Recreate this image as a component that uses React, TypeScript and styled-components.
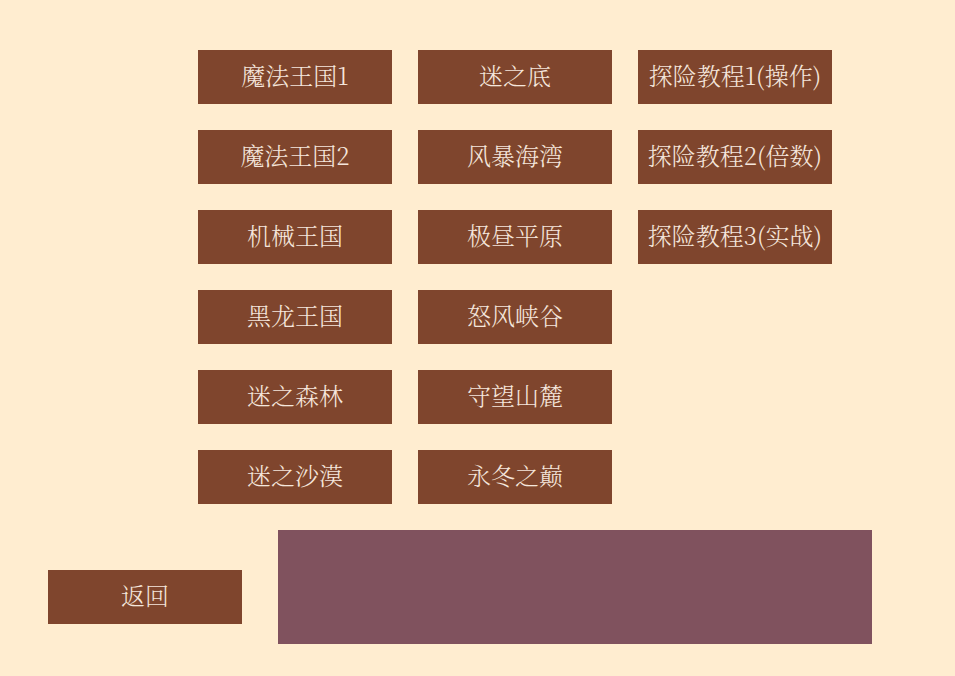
import styled, { createGlobalStyle } from 'styled-components';

const GlobalStyle = createGlobalStyle`
  html, body {
    margin: 0;
    padding: 0;
    background: #ffedd0;
  }
  body {
    font-family: "Noto Sans CJK SC", serif;
  }
`;

const columns: string[][] = [
  ['魔法王国1', '魔法王国2', '机械王国', '黑龙王国', '迷之森林', '迷之沙漠'],
  ['迷之底', '风暴海湾', '极昼平原', '怒风峡谷', '守望山麓', '永冬之巅'],
  ['探险教程1(操作)', '探险教程2(倍数)', '探险教程3(实战)'],
];

const App = () => {
  return (
    <Page>
      <GlobalStyle />
      <LevelGrid>
        {columns.map((col, i) => (
          <Column key={i}>
            {col.map((name) => (
              <LevelButton key={name} type='button'>
                {name}
              </LevelButton>
            ))}
          </Column>
        ))}
      </LevelGrid>
      <BottomRow>
        <BackButton type='button'>返回</BackButton>
        <InfoPanel />
      </BottomRow>
    </Page>
  );
};

export default App;

const Page = styled.div`
  width: 955px;
  height: 676px;
  padding: 50px 0 0 48px;
  box-sizing: border-box;
  background: #ffedd0;
`;

const LevelGrid = styled.div`
  display: flex;
  gap: 26px;
  margin-left: 150px;
`;

const Column = styled.div`
  display: flex;
  flex-direction: column;
  gap: 26px;
`;

const LevelButton = styled.button`
  width: 194px;
  height: 54px;
  border: none;
  padding: 0 0 5px;
  background: #7f452d;
  color: #f5e6dc;
  font-family: "Noto Serif CJK SC", "Noto Sans CJK SC", serif;
  font-size: 24px;
  font-weight: 300;
  line-height: 1;
  white-space: nowrap;
  cursor: pointer;
`;

const BackButton = styled(LevelButton)`
  margin-top: 40px;
`;

const BottomRow = styled.div`
  display: flex;
  align-items: flex-start;
  gap: 36px;
  margin-top: 26px;
`;

const InfoPanel = styled.div`
  width: 594px;
  height: 114px;
  background: #80525e;
`;
